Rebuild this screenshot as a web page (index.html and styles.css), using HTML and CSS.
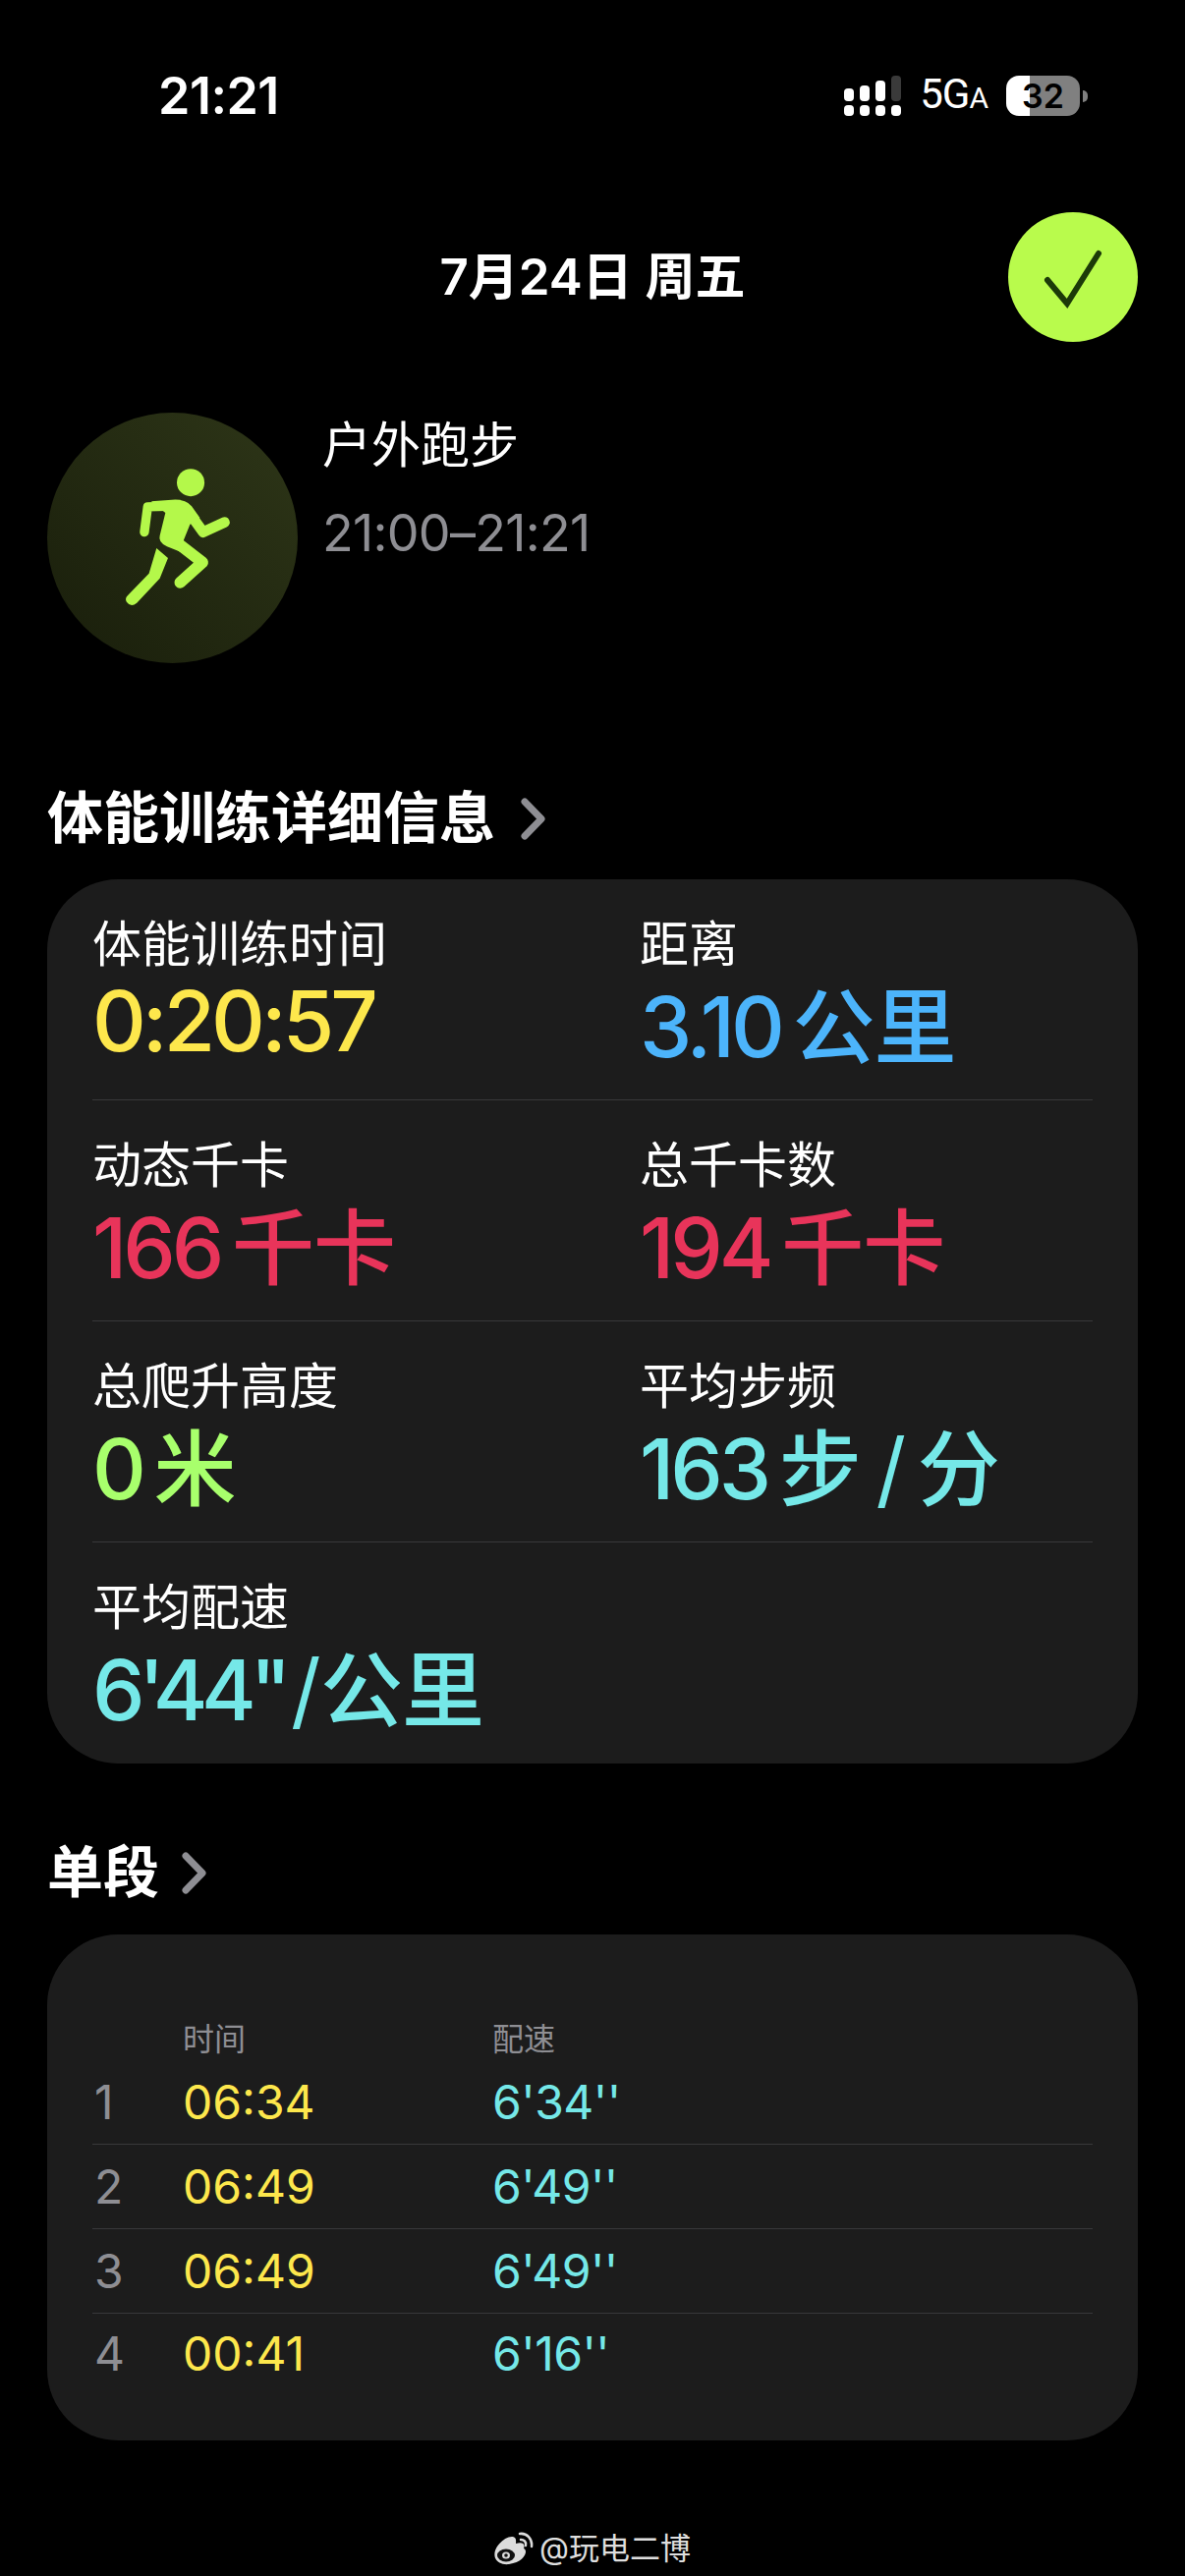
FILE: index.html
```html
<!DOCTYPE html>
<html>

	<head>
		<meta charset="UTF-8">
		<title>体能训练</title>
		<link rel="stylesheet" href="styles.css">
	</head>

	<body>
		<div class="status">
			<span class="clock">21:21</span>
			<div class="status-right">
				<svg class="signal" width="58" height="41" viewBox="0 0 58 41">
					<rect x="0" y="13" width="10" height="13" rx="4" fill="#fff" />
					<rect x="16" y="10" width="10" height="16" rx="4" fill="#fff" />
					<rect x="32" y="5" width="10" height="21" rx="4" fill="#fff" />
					<rect x="48" y="0" width="10" height="26" rx="4" fill="#3a3a3a" />
					<rect x="0" y="30" width="10" height="11" rx="4" fill="#fff" />
					<rect x="16" y="30" width="10" height="11" rx="4" fill="#fff" />
					<rect x="32" y="30" width="10" height="11" rx="4" fill="#fff" />
					<rect x="48" y="30" width="10" height="11" rx="4" fill="#fff" />
				</svg>
				<span class="net">5G<small>A</small></span>
				<div class="battery"><span>32</span></div>
				<i class="battery-cap"></i>
			</div>
		</div>

		<div class="top">
			<span></span>
			<h1>7月24日 周五</h1>
			<div class="done">
				<svg width="132" height="132" viewBox="0 0 132 132">
					<path d="M40 69 L60 93 L92 42" fill="none" stroke="#1c3a08" stroke-width="6" stroke-linecap="round" stroke-linejoin="miter" />
				</svg>
			</div>
		</div>

		<div class="workout">
			<div class="badge">
				<!-- 跑步小人 -->
				<svg width="255" height="255" viewBox="55 60 763 763">
					<g fill="#b4f84a">
						<circle cx="492" cy="273" r="42" />
						<path d="M372 330 L445 325 Q478 325 495 345 L520 380 L490 400 L468 455 L500 500 L420 468 Q392 455 398 435 L415 365 Z" />
						<path d="M388 473 L423 503 L398 565 L328 640 Q310 655 297 637 Q290 625 302 615 L365 550 Z" />
					</g>
					<g fill="none" stroke="#b4f84a" stroke-linecap="round" stroke-linejoin="round">
						<path d="M351 424 L361 347 L420 345" stroke-width="28" />
						<path d="M595 394 L530 424 L495 375" stroke-width="32" />
						<path d="M440 448 L528 516 L460 577" stroke-width="35" />
					</g>
				</svg>
			</div>
			<div class="workout-text">
				<p class="workout-name">户外跑步</p>
				<p class="workout-time">21:00–21:21</p>
			</div>
		</div>

		<h2 class="section first">体能训练详细信息
			<svg width="25" height="43" viewBox="0 0 25 43"><path d="M4 4 L21 21.500 L4 39" fill="none" stroke="#8e8e93" stroke-width="7" stroke-linecap="round" stroke-linejoin="round" /></svg>
		</h2>
		<div class="card stats">
			<div class="stat-row">
				<div>
					<div class="label">体能训练时间</div>
					<div class="value yellow">0:20:57</div>
				</div>
				<div>
					<div class="label">距离</div>
					<div class="value blue">3.10 <em>公里</em></div>
				</div>
			</div>
			<div class="stat-row">
				<div>
					<div class="label">动态千卡</div>
					<div class="value red">166 <em>千卡</em></div>
				</div>
				<div>
					<div class="label">总千卡数</div>
					<div class="value red">194 <em>千卡</em></div>
				</div>
			</div>
			<div class="stat-row">
				<div>
					<div class="label">总爬升高度</div>
					<div class="value green">0 <em>米</em></div>
				</div>
				<div>
					<div class="label">平均步频</div>
					<div class="value cyan">163 <em>步</em> <i>/</i> <em>分</em></div>
				</div>
			</div>
			<div class="stat-row">
				<div>
					<div class="label">平均配速</div>
					<div class="value pace cyan">6'44"<i>/</i><em>公里</em></div>
				</div>
			</div>
		</div>

		<h2 class="section second">单段
			<svg width="25" height="43" viewBox="0 0 25 43"><path d="M4 4 L21 21.500 L4 39" fill="none" stroke="#8e8e93" stroke-width="7" stroke-linecap="round" stroke-linejoin="round" /></svg>
		</h2>
		<div class="card splits">
			<div class="split-head">
				<span></span><span>时间</span><span>配速</span>
			</div>
			<div class="split">
				<span class="idx">1</span><span class="yellow">06:34</span><span class="cyan">6'34''</span>
			</div>
			<div class="split">
				<span class="idx">2</span><span class="yellow">06:49</span><span class="cyan">6'49''</span>
			</div>
			<div class="split">
				<span class="idx">3</span><span class="yellow">06:49</span><span class="cyan">6'49''</span>
			</div>
			<div class="split">
				<span class="idx">4</span><span class="yellow">00:41</span><span class="cyan">6'16''</span>
			</div>
		</div>

		<div class="mark">
			<svg width="42" height="34" viewBox="0 0 42 34">
				<path d="M3 19 C6 11 15 4 21 5 C25 6 24 10 24 12 C30 10 34 12 32 17 C37 19 33 31 17 33 C8 34 0 29 3 19 Z" fill="#dcdcdc" />
				<ellipse cx="14" cy="24" rx="9" ry="6.500" fill="#111" />
				<ellipse cx="14" cy="24" rx="4" ry="3.500" fill="#dcdcdc" />
				<circle cx="14" cy="24" r="1.800" fill="#111" />
				<path d="M28 2 C35 1 41 7 40 15" fill="none" stroke="#dcdcdc" stroke-width="2.500" stroke-linecap="round" />
				<path d="M29 8 C32 8 35 10 34 14" fill="none" stroke="#dcdcdc" stroke-width="2.500" stroke-linecap="round" />
			</svg>
			<span>@玩电二博</span>
		</div>
	</body>

</html>
```

FILE: styles.css
```css
html,
body {
	margin: 0;
	background: #000;
}

body {
	width: 1206px;
	height: 2622px;
	overflow: hidden;
	color: #fff;
	font-family: Inter, "Noto Sans CJK SC", sans-serif;
}

h1,
h2,
p {
	margin: 0;
}

em {
	font-style: normal;
	font-family: "Noto Sans CJK SC", sans-serif;
	font-weight: 500;
}

.yellow {
	color: #fde74c;
}

.blue {
	color: #4cb4fb;
}

.red {
	color: #e8345a;
}

.green {
	color: #a8ff6c;
}

.cyan {
	color: #75e8e8;
}

/* 状态栏 */
.status {
	display: flex;
	justify-content: space-between;
	align-items: center;
	height: 41px;
	padding: 77px 107px 0 161px;
}

.clock {
	font-size: 52px;
	font-weight: 600;
	letter-spacing: -0.5px;
}

.status-right {
	display: flex;
	align-items: center;
}

.net {
	margin-left: 19px;
	font-family: Roboto, sans-serif;
	font-size: 42px;
	line-height: 41px;
	letter-spacing: -1px;
}

.net small {
	font-size: 30px;
}

.battery {
	width: 75px;
	height: 41px;
	margin-left: 19px;
	border-radius: 13px;
	background: linear-gradient(90deg, #fff 24px, #808080 24px);
	color: #000;
	font-size: 34px;
	font-weight: 600;
	line-height: 41px;
	text-align: center;
}

.battery-cap {
	width: 5px;
	height: 12px;
	margin-left: 3px;
	margin-right: -8px;
	border-radius: 0 5px 5px 0;
	background: #808080;
}

/* 日期 */
.top {
	display: grid;
	grid-template-columns: 1fr auto 1fr;
	align-items: center;
	padding: 98px 48px 0;
}

.top h1 {
	font-size: 51px;
	font-weight: 600;
	line-height: 132px;
	white-space: nowrap;
}

.done {
	justify-self: end;
	width: 132px;
	height: 132px;
	border-radius: 50%;
	background: #b9fb4c;
}

.done svg {
	display: block;
}

.workout {
	display: flex;
	gap: 25px;
	padding: 72px 48px 0;
}

.badge {
	width: 255px;
	height: 255px;
	flex: none;
	border-radius: 50%;
	background: linear-gradient(45deg, #191e0b, #2e3618);
}

.badge svg {
	display: block;
}

.workout-text {
	padding-top: 3px;
}

.workout-name {
	font-size: 50px;
	line-height: 60px;
}

.workout-time {
	margin-top: 30px;
	color: #8e8e93;
	font-size: 52px;
	line-height: 60px;
	letter-spacing: -0.7px;
}

/* 小节标题 */
.section {
	display: flex;
	align-items: center;
	gap: 26px;
	margin: 0 48px;
	font-size: 57px;
	font-weight: 700;
	line-height: 60px;
}

.section.first {
	margin-top: 128px;
}

.section.second {
	margin-top: 81px;
	gap: 23px;
}

.card {
	margin: 0 48px;
	border-radius: 72px;
	background: #1c1c1c;
}

.stats {
	margin-top: 32px;
	padding: 0 46px;
	height: 900px;
}

.stat-row {
	display: grid;
	grid-template-columns: 557px 1fr;
	height: 224px;
	border-bottom: 1px solid #38383a;
}

.stat-row:last-child {
	border-bottom: 0;
}

.label {
	padding-top: 36px;
	font-size: 50px;
	line-height: 60px;
}

.value {
	margin-top: 4px;
	font-size: 85px;
	font-weight: 500;
	line-height: 90px;
	letter-spacing: -4px;
	word-spacing: -7px;
	white-space: nowrap;
}

.value em {
	font-size: 84px;
	letter-spacing: -1px;
}

.value i {
	margin: 0 4px;
	font-weight: 400;
	font-style: normal;
}

.value.pace {
	letter-spacing: -6.5px;
}

.value.pace i {
	margin: 0 6px;
}

.splits {
	margin-top: 33px;
	padding: 89px 46px 0;
	height: 426px;
}

.split-head,
.split {
	display: grid;
	grid-template-columns: 92px 315px 1fr;
}

.split-head {
	margin-bottom: 3px;
	color: #8e8e93;
	font-size: 32px;
	line-height: 36px;
}

.split {
	height: 85px;
	align-items: center;
	border-bottom: 1px solid #38383a;
	font-size: 48px;
}

.split:last-child {
	height: 81px;
	border-bottom: 0;
}

.split .cyan {
	letter-spacing: -0.5px;
}

.idx {
	padding-left: 2px;
	color: #8e8e93;
}

.mark {
	display: flex;
	justify-content: center;
	align-items: center;
	gap: 6px;
	margin-top: 90px;
	margin-right: 2px;
	color: #dedede;
	font-size: 31px;
	line-height: 40px;
}
```
